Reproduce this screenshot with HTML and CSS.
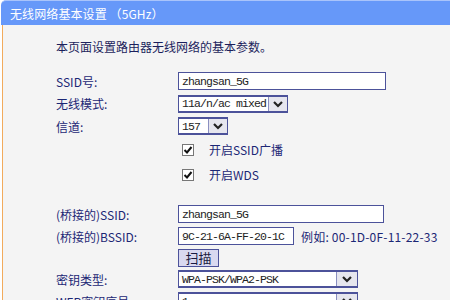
FILE: index.html
```
<!DOCTYPE html>
<html lang="zh-CN">
<head>
<meta charset="utf-8">
<title>无线网络基本设置</title>
<link rel="stylesheet" href="styles.css">
</head>
<body>
<div class="wrap">
  <div class="head">无线网络基本设置 （5GHz）</div>
  <div class="panel">
    <p class="desc">本页面设置路由器无线网络的基本参数。</p>
    <div class="rows">
      <div class="row r22 first">
        <span class="label">SSID号:</span>
        <span class="input w208">zhangsan_5G</span>
      </div>
      <div class="row r23">
        <span class="label">无线模式:</span>
        <span class="select w110"><span class="val">11a/n/ac mixed</span><span class="arrow"><svg width="12" height="8" viewBox="0 0 12 8"><path d="M2 2 L6 6 L10 2" fill="none" stroke="#222" stroke-width="2.2"/></svg></span></span>
      </div>
      <div class="row r22">
        <span class="label">信道:</span>
        <span class="select w50"><span class="val">157</span><span class="arrow"><svg width="12" height="8" viewBox="0 0 12 8"><path d="M2 2 L6 6 L10 2" fill="none" stroke="#222" stroke-width="2.2"/></svg></span></span>
      </div>
      <div class="row r25 chkrow">
        <span class="label"></span>
        <span class="chk"><svg width="12" height="12" viewBox="0 0 12 12"><rect x="0.5" y="0.5" width="11" height="11" fill="#fff" stroke="#777"/><path d="M2.5 6 L5 8.5 L9.5 3" fill="none" stroke="#111" stroke-width="2"/></svg></span>
        <span class="chktext">开启SSID广播</span>
      </div>
      <div class="row r25 chkrow">
        <span class="label"></span>
        <span class="chk"><svg width="12" height="12" viewBox="0 0 12 12"><rect x="0.5" y="0.5" width="11" height="11" fill="#fff" stroke="#777"/><path d="M2.5 6 L5 8.5 L9.5 3" fill="none" stroke="#111" stroke-width="2"/></svg></span>
        <span class="chktext">开启WDS</span>
      </div>
      <div class="row r22 gapped">
        <span class="label">(桥接的)SSID:</span>
        <span class="input w206">zhangsan_5G</span>
      </div>
      <div class="row r22">
        <span class="label">(桥接的)BSSID:</span>
        <span class="input w116">9C-21-6A-FF-20-1C</span>
        <span class="hint">例如: 00-1D-0F-11-22-33</span>
      </div>
      <div class="row r21">
        <span class="label"></span>
        <span class="btn">扫描</span>
      </div>
      <div class="row r22">
        <span class="label">密钥类型:</span>
        <span class="select w180"><span class="val">WPA-PSK/WPA2-PSK</span><span class="arrow wide"><svg width="12" height="8" viewBox="0 0 12 8"><path d="M2 2 L6 6 L10 2" fill="none" stroke="#222" stroke-width="2.2"/></svg></span></span>
      </div>
      <div class="row r22">
        <span class="label">WEP密钥序号:</span>
        <span class="select w180"><span class="val">1</span><span class="arrow wide"><svg width="12" height="8" viewBox="0 0 12 8"><path d="M2 2 L6 6 L10 2" fill="none" stroke="#222" stroke-width="2.2"/></svg></span></span>
      </div>
    </div>
  </div>
</div>
</body>
</html>
```
FILE: styles.css
```
html, body {
  margin: 0;
  padding: 0;
  background: #fff;
  overflow: hidden;
}
body {
  width: 450px;
  height: 300px;
  font-family: "Noto Sans CJK SC", "Noto Sans", sans-serif;
  font-size: 12px;
  color: #1f2a78;
}
.wrap {
  padding-left: 1px;
}
.head {
  height: 25px;
  line-height: 25px;
  background: #6698f9;
  border-top: 1px solid #a9c4fb;
  box-sizing: border-box;
  border-radius: 5px 0 0 0;
  color: #fff;
  padding-left: 9px;
  font-size: 12px;
  letter-spacing: 0.1px;
}
.panel {
  margin-left: 1px;
  border-left: 1px solid #f2ab5c;
  background: #f4f4f4;
  height: 280px;
  padding-left: 53px;
}
.desc {
  margin: 0;
  padding-top: 14px;
  height: 31px;
  line-height: 16px;
  box-sizing: border-box;
  color: #1c1f5c;
}
.rows {
  display: flex;
  flex-direction: column;
}
.row {
  display: flex;
  align-items: center;
}
.first { margin-top: 14px; }
.gapped { margin-top: 16px; }
.r21 { height: 21px; }
.r22 { height: 22px; }
.r23 { height: 23px; }
.r25 { height: 25px; }
.label {
  width: 122px;
  flex: none;
  color: #1c2775;
}
.input, .select {
  height: 18px;
  box-sizing: border-box;
  border: 1px solid #4c529a;
  background: #fff;
  font-family: "Liberation Mono", "DejaVu Sans Mono", monospace;
  font-size: 11.5px;
  letter-spacing: -0.9px;
  color: #222;
  display: flex;
  align-items: center;
  padding-left: 3px;
  flex: none;
}
.w208 { width: 208px; }
.w206 { width: 206px; }
.w116 { width: 116px; }
.w110 { width: 110px; }
.w50 { width: 50px; }
.w180 { width: 180px; }
.select {
  padding-left: 0;
  border-width: 2px 1px 2px 1px;
  border-color: #4c529a;
}
.select .val {
  flex: 1;
  padding-left: 3px;
  white-space: nowrap;
  overflow: hidden;
}
.select .arrow {
  width: 18px;
  height: 100%;
  background: #e6e6ee;
  border-left: 1px solid #8a8fc0;
  display: flex;
  align-items: center;
  justify-content: center;
  flex: none;
}
.select .arrow.wide { width: 20px; }
.chkrow .label { width: 126px; }
.chk {
  width: 12px;
  height: 12px;
  display: flex;
  flex: none;
}
.chktext {
  margin-left: 15px;
  color: #1c2775;
}
.hint {
  margin-left: 7px;
  color: #1c2775;
  font-family: "Noto Sans CJK SC", sans-serif;
  letter-spacing: 0.2px;
}
.btn {
  width: 41px;
  height: 18px;
  box-sizing: border-box;
  border: 1px solid #4c529a;
  background: #d9d9f0;
  color: #1a1a40;
  font-size: 13px;
  display: flex;
  align-items: center;
  justify-content: center;
}
```
